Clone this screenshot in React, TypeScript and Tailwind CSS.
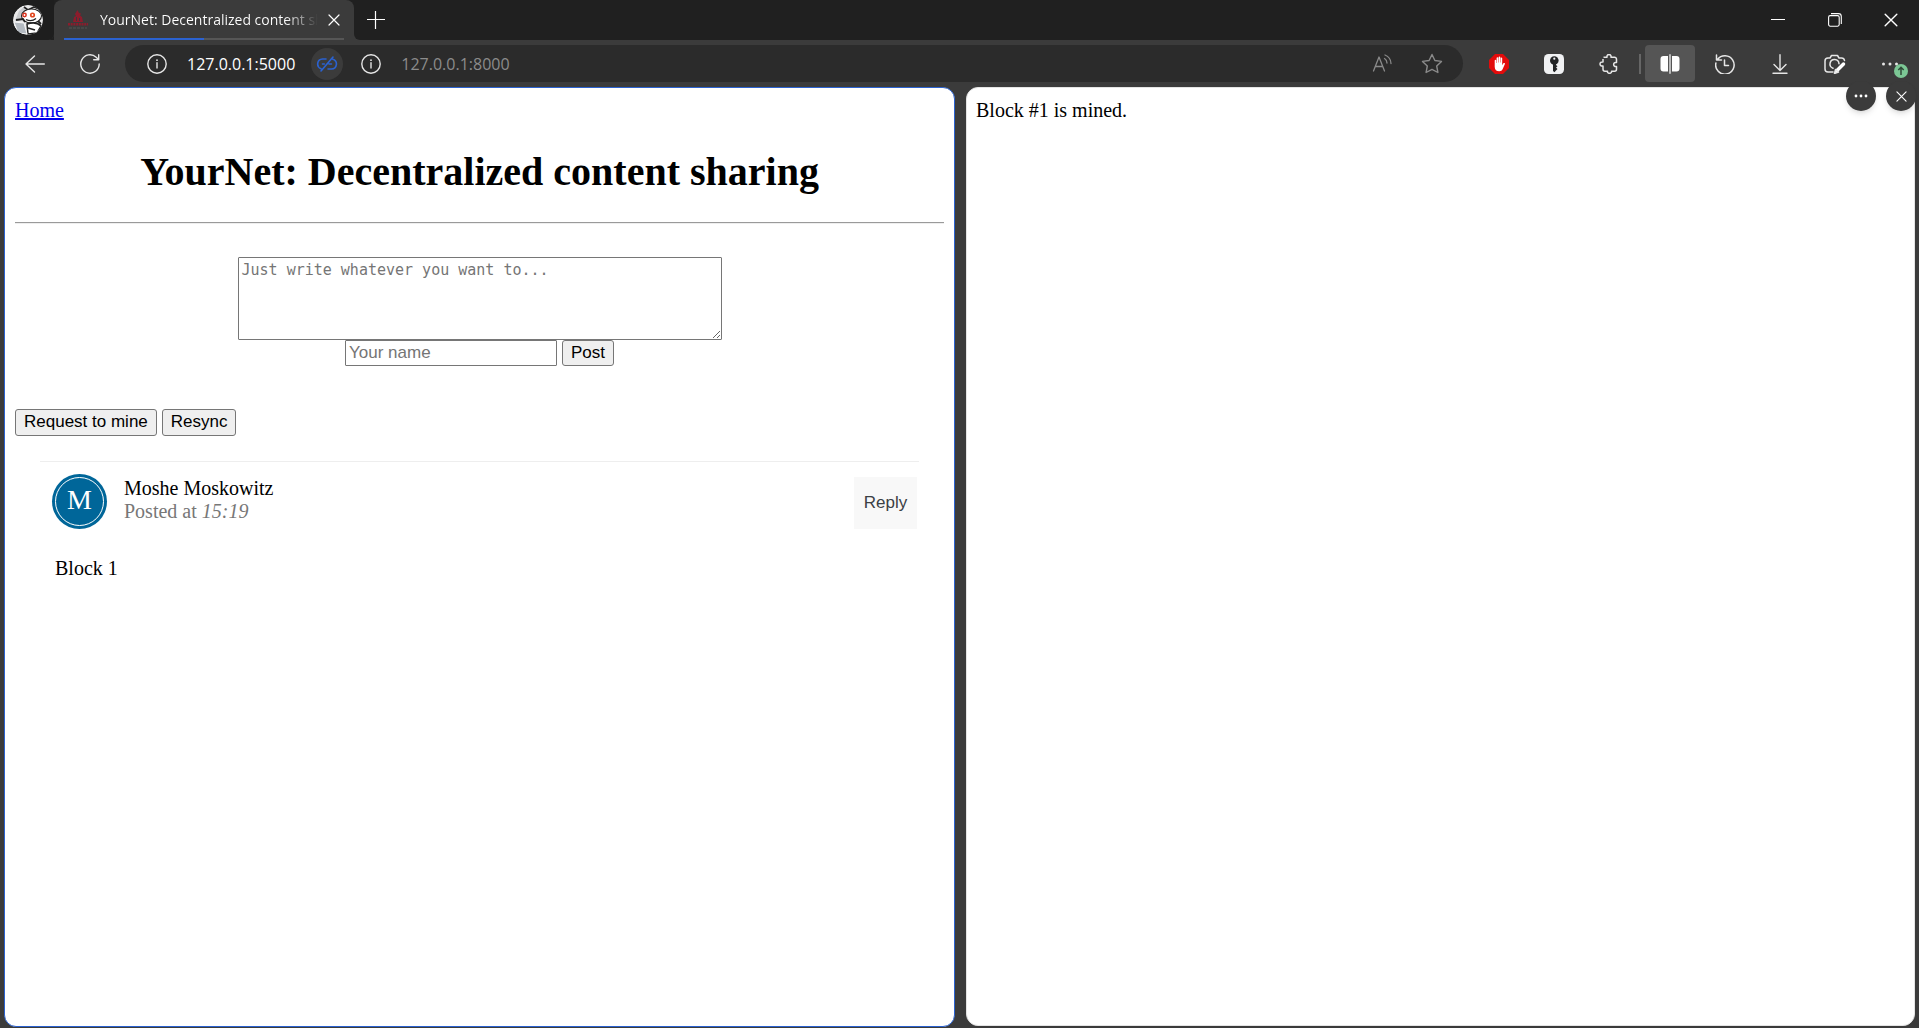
import type { ReactNode } from "react";

function InfoIcon() {
  return (
    <svg width="20" height="20" viewBox="0 0 20 20" fill="none" stroke="#e6e6e6" strokeWidth="1.4" className="shrink-0">
      <circle cx="10" cy="10" r="9.2" />
      <path d="M10 8.8V14" strokeLinecap="round" />
      <circle cx="10" cy="6.2" r="0.9" fill="#e6e6e6" stroke="none" />
    </svg>
  );
}

function CloseIcon({ size }: { size: number }) {
  return (
    <svg width={size} height={size} viewBox="0 0 12 12" fill="none" stroke="#fff" strokeWidth="1.2" strokeLinecap="round">
      <path d="M1 1l10 10M11 1L1 11" />
    </svg>
  );
}

function IconButton({ label, className = "", children }: { label: string; className?: string; children: ReactNode }) {
  return (
    <button type="button" aria-label={label} className={`flex shrink-0 items-center justify-center ${className}`}>
      {children}
    </button>
  );
}

function TabStrip() {
  return (
    <header className="flex h-10 bg-[#202020]">
      <div className="rounded-br-md bg-[#3b3b3b]">
        <div className="flex h-full w-[54px] items-center justify-center rounded-br-md bg-[#1e1e1e] pl-[2px]">
          <button type="button" aria-label="Profile" className="size-[30px] overflow-hidden rounded-full">
            <svg width="30" height="30" viewBox="0 0 30 30">
              <circle cx="15" cy="15" r="15" fill="#e9e9ea" />
              <path d="M2 16l4-10 5-4 2 5-5 8z" fill="#c9cbce" />
              <path d="M11 2l4 3 6-3 5 2" fill="none" stroke="#222" strokeWidth="1.6" />
              <ellipse cx="18.5" cy="11" rx="10" ry="7" fill="#fff" stroke="#222" strokeWidth="1.1" />
              <circle cx="11.5" cy="10" r="2.4" fill="#d5301c" />
              <circle cx="19.5" cy="10" r="2.6" fill="#e2461e" />
              <circle cx="11.5" cy="10" r="0.9" fill="#fff" />
              <circle cx="19.5" cy="10" r="0.9" fill="#fff" />
              <path d="M13 14.500c3 1.500 7 1.500 10-1" fill="none" stroke="#222" strokeWidth="1.300" />
              <path d="M3 15l7-1 2 3" fill="none" stroke="#222" strokeWidth="1.800" />
              <path d="M14 19c6-2 11-1 14 2l-4 7-9 1z" fill="#fff" stroke="#222" strokeWidth="1.500" />
              <path d="M1 17l10 1 3 11-9-1z" fill="#b4bac1" stroke="#f5f5f5" strokeWidth="1" />
              <path d="M15 23l7 2M25 16l3 3" stroke="#222" strokeWidth="1.800" />
            </svg>
          </button>
        </div>
      </div>
      <div className="flex w-[300px] flex-col rounded-t-lg bg-[#3b3b3b] px-[10px]">
        <div className="flex flex-1 items-center pt-[2px] pl-1">
          <svg width="20" height="20" viewBox="0 0 20 20" className="shrink-0">
            <path d="M9.500 0l1.500 3 2 .500-1 2 2 1.500 1 5H5l1-5 2-1-1-2z" fill="#8c1c2c" />
            <path d="M8 7h1v4H8zM11 8h1v3h-1z" fill="#3b3b3b" />
            <path d="M0 14.300h20" stroke="#8c1c2c" strokeWidth="2.600" strokeDasharray="2 .7" />
            <path d="M1 18h18" stroke="#545454" strokeWidth="1" strokeDasharray="3 1" />
          </svg>
          <span className="ml-3 w-[218px] overflow-hidden whitespace-nowrap bg-gradient-to-r from-white from-85% to-transparent bg-clip-text text-sm font-medium text-transparent">
            YourNet: Decentralized content sharing
          </span>
          <IconButton label="Close tab" className="ml-[6px] size-5">
            <CloseIcon size={12} />
          </IconButton>
        </div>
        <div className="h-[2px] bg-[#565656]">
          <div className="h-full w-1/2 bg-[#2b62d0]" />
        </div>
      </div>
      <div className="flex-1 bg-[#3b3b3b]">
        <div className="flex h-full items-center rounded-bl-md bg-[#202020]">
          <IconButton label="New tab" className="ml-2 size-7">
            <svg width="18" height="18" viewBox="0 0 18 18" stroke="#fff" strokeWidth="1.2">
              <path d="M8.500 0v18M0 8.500h18" />
            </svg>
          </IconButton>
          <div className="ml-auto flex h-full">
            <IconButton label="Minimize" className="w-[57px]">
              <svg width="14" height="14" viewBox="0 0 14 14" stroke="#fff">
                <path d="M0 6.5h14" />
              </svg>
            </IconButton>
            <IconButton label="Restore" className="w-[57px]">
              <svg width="14" height="14" viewBox="0 0 14 14" fill="none" stroke="#fff" strokeWidth="1.1">
                <rect x="0.6" y="2.6" width="10.6" height="10.6" rx="1.6" />
                <path d="M3 .6h7.5a2.8 2.8 0 0 1 2.8 2.8V11" />
              </svg>
            </IconButton>
            <IconButton label="Close window" className="w-14">
              <CloseIcon size={14} />
            </IconButton>
          </div>
        </div>
      </div>
    </header>
  );
}

function Toolbar() {
  return (
    <nav className="flex h-[47px] items-center pr-[2px] pl-[7px]">
      <IconButton label="Back" className="w-[55px]">
        <svg width="20" height="18" viewBox="0 0 20 18" fill="none" stroke="#e6e6e6" strokeWidth="1.4" strokeLinecap="round" strokeLinejoin="round">
          <path d="M19.3 9H1M9.5 1L1 9l8.500 8" />
        </svg>
      </IconButton>
      <IconButton label="Refresh" className="w-[55px]">
        <svg width="20" height="20" viewBox="0 0 20 20" fill="none" stroke="#e6e6e6" strokeWidth="1.4" strokeLinecap="round" strokeLinejoin="round">
          <path d="M19.200 10a9.200 9.200 0 1 1-3-6.800L18.500 5.500M18.700.8v5h-5" />
        </svg>
      </IconButton>
      <div className="mr-2 ml-2 flex h-[37px] min-w-0 flex-1 items-center rounded-full bg-[#2b2b2b] pl-[22px] text-base">
        <InfoIcon />
        <span className="ml-5 text-white">127.0.0.1:5000</span>
        <IconButton label="Unlink tabs" className="ml-4 size-8 rounded-full bg-[#3b3b3b]">
          <svg width="22" height="16" viewBox="0 0 22 16" fill="none" stroke="#2b62d0" strokeWidth="1.600" strokeLinecap="round">
            <path d="M10 3H6.500a5 5 0 0 0-1.500 9.700M16.800 3.200a5 5 0 0 1-1.300 9.800H12M6.500 8h1.800M13 8h2.500M17 1L5 15" />
          </svg>
        </IconButton>
        <span className="ml-[18px] flex">
          <InfoIcon />
        </span>
        <span className="ml-5 text-[#8c8c8c]">127.0.0.1:8000</span>
        <div className="ml-auto flex pr-[6px]">
          <IconButton label="Read aloud" className="w-[50px]">
            <svg width="20" height="20" viewBox="0 0 20 20" fill="none" stroke="#8a8a8a" strokeWidth="1.3" strokeLinecap="round" strokeLinejoin="round">
              <path d="M1.500 17L7 3l5.500 14M3.300 12.500h7.400M12.500 4.500c1.700 1 2.500 2.500 2.500 4.500M13 1c3.500 1.300 5.800 4.500 6 8.500" />
            </svg>
          </IconButton>
          <IconButton label="Add to favorites" className="w-[50px]">
            <svg width="22" height="21" viewBox="0 0 22 21" fill="none" stroke="#8a8a8a" strokeWidth="1.4" strokeLinejoin="round">
              <path d="M11 1.500l2.900 6 6.600.9-4.800 4.600 1.200 6.500-5.900-3.100-5.900 3.100 1.200-6.500L1.500 8.400l6.600-.9z" />
            </svg>
          </IconButton>
        </div>
      </div>
      <IconButton label="Ad blocker" className="w-[55px]">
        <svg width="20" height="20" viewBox="0 0 20 20">
          <path d="M6 0h8l6 6v8l-6 6H6l-6-6V6z" fill="#e30b0b" />
          <path d="M5.700 6.500c0-1 1.500-1 1.500 0V9h.4V4c0-1.100 1.600-1.100 1.600 0v4.500h.4V3.300c0-1.100 1.700-1.100 1.700 0v5.200h.4V4.200c0-1.100 1.500-1.100 1.500 0v7l1.200-1.900c.6-.8 1.900-.3 1.500.7l-2.200 5c-.7 1.600-1.700 2.200-3.500 2.200-2.700 0-4.500-1.500-4.500-4.500z" fill="#fff" />
        </svg>
      </IconButton>
      <IconButton label="Password manager" className="w-[55px]">
        <svg width="20" height="20" viewBox="0 0 20 20">
          <rect width="20" height="20" rx="4.500" fill="#f0f1f3" />
          <circle cx="10.300" cy="6.500" r="4.300" fill="#222426" />
          <circle cx="10.300" cy="4.700" r="1.100" fill="#f0f1f3" />
          <path d="M9 9h3v2l1.500 1.200L12 13.500l1.500 1.500-1.500 1.500-1.500 1.700L9 17z" fill="#222426" />
        </svg>
      </IconButton>
      <IconButton label="Extensions" className="w-[55px]">
        <svg width="20" height="20" viewBox="0 0 20 20" fill="none" stroke="#e6e6e6" strokeWidth="1.500" strokeLinejoin="round">
          <path d="M4.500 3.200H8c-.7-3.600 4.700-3.600 4 0h3.500a2 2 0 0 1 2 2V8.500c-3.800-.9-3.800 4.900 0 4v2.700a2 2 0 0 1-2 2H12.500c.6 2.800-4.600 2.800-4 0H6a2 2 0 0 1-2-2V12c-4 .6-4-4.600 0-4V5" />
        </svg>
      </IconButton>
      <div className="mr-1 ml-[3px] h-5 w-[2px] bg-[#666]" />
      <IconButton label="Split screen" className="h-[37px] w-[50px] rounded bg-[#555]">
        <svg width="20" height="20" viewBox="0 0 20 20" fill="#fff">
          <path d="M3.500 2H8v15.500H3.500A3 3 0 0 1 .5 14.500V5a3 3 0 0 1 3-3zM12 2h4.500a3 3 0 0 1 3 3v9.500a3 3 0 0 1-3 3H12zM9.400.2h1.200v19.500H9.400z" />
        </svg>
      </IconButton>
      <IconButton label="History" className="ml-[2px] w-[55px]">
        <svg width="20" height="20" viewBox="0 0 20 20" fill="none" stroke="#e6e6e6" strokeWidth="1.500" strokeLinecap="round" strokeLinejoin="round">
          <path d="M2.500 5.500A9.200 9.200 0 1 1 .9 9M1.500.9v5h5M9.500 6v5.500h4" />
        </svg>
      </IconButton>
      <IconButton label="Downloads" className="w-[55px]">
        <svg width="16" height="20" viewBox="0 0 16 20" fill="none" stroke="#e6e6e6" strokeWidth="1.400" strokeLinecap="round" strokeLinejoin="round">
          <path d="M8 .8v15.500M2 10.500l6 6 6-6M1 19.300h14" />
        </svg>
      </IconButton>
      <IconButton label="Screenshot" className="w-[55px]">
        <svg width="22" height="20" viewBox="0 0 22 20" fill="none" stroke="#e6e6e6" strokeWidth="1.500" strokeLinecap="round" strokeLinejoin="round">
          <path d="M9 18H4a3 3 0 0 1-3-3V7a3 3 0 0 1 3-3h2l1.500-2.500h6L15 4h2.500a3 3 0 0 1 3 2.500M9 14.200a4.500 4.500 0 1 1 6-4.500" />
          <path d="M19.500 10L13.500 16" stroke="#fff" strokeWidth="3.500" />
          <path d="M10.500 19.500l1-4 3 2.500z" fill="#fff" />
        </svg>
      </IconButton>
      <IconButton label="Settings and more" className="relative h-full w-[55px]">
        <svg width="18" height="4" viewBox="0 0 18 4" fill="#e6e6e6">
          <circle cx="2.500" cy="2" r="1.500" />
          <circle cx="9" cy="2" r="1.500" />
          <circle cx="15.500" cy="2" r="1.500" />
        </svg>
        <svg width="14" height="14" viewBox="0 0 14 14" className="absolute right-[9px] bottom-[9px]">
          <circle cx="7" cy="7" r="7" fill="#7cc795" />
          <path d="M7 11V3.500M4.300 6L7 3.300 9.700 6" fill="none" stroke="#2f4a38" strokeWidth="1.500" />
        </svg>
      </IconButton>
    </nav>
  );
}

const formButton =
  "rounded-[3px] border border-[#767676] bg-[#efefef] px-2 pb-[2px] font-['Liberation_Sans',Arial,sans-serif] text-[17px] leading-[19px] text-black";

function FeedPage() {
  return (
    <main className="min-w-0 flex-1 rounded-xl border border-[#2b62d0] bg-white px-[10px] py-[11px] font-['Liberation_Serif','Times_New_Roman',serif] text-xl leading-[23px] text-black">
      <a href="#home" className="text-[#0000ee] underline decoration-2">
        Home
      </a>
      <h1 className="mt-[27px] text-center text-[40px] leading-[46px] font-bold">YourNet: Decentralized content sharing</h1>
      <hr className="mt-[27px] border-t border-b border-t-[#9a9a9a] border-b-[#eee]" />
      <form className="mt-[33px] flex flex-col items-center font-['Liberation_Sans',Arial,sans-serif] text-[17px]">
        <textarea
          aria-label="Post content"
          placeholder="Just write whatever you want to..."
          className="block h-[83px] w-[484px] resize rounded-[1px] border border-[#767676] bg-white px-[3px] py-[3px] font-['DejaVu_Sans_Mono',monospace] text-[15px] leading-[19px] placeholder:text-[#757575]"
        />
        <div className="flex gap-[5px]">
          <input
            type="text"
            aria-label="Your name"
            placeholder="Your name"
            className="h-[26px] w-[212px] rounded-[1px] border border-[#767676] bg-white px-[3px] leading-[19px] placeholder:text-[#757575]"
          />
          <button type="button" className={`${formButton} h-[26px]`}>
            Post
          </button>
        </div>
      </form>
      <div className="mt-[43px] flex gap-[5px]">
        <button type="button" className={`${formButton} h-[27px]`}>
          Request to mine
        </button>
        <button type="button" className={`${formButton} h-[27px]`}>
          Resync
        </button>
      </div>
      <article className="mx-[25px] mt-[25px] border-t border-[#eee] px-3 pt-3">
        <div className="flex items-start">
          <div className="size-[55px] shrink-0 rounded-full bg-[#006699] p-[3px]">
            <div className="flex h-full items-center justify-center rounded-full border border-white pb-1 text-[28px] text-white">M</div>
          </div>
          <div className="mt-[3px] ml-[17px] flex-1">
            <p>Moshe Moskowitz</p>
            <p className="text-[#777]">
              Posted at <i>15:19</i>
            </p>
          </div>
          <button
            type="button"
            className="mt-[3px] -mr-[10px] h-[52px] w-[63px] bg-[#f8f8f8] pb-[2px] font-['Liberation_Sans',Arial,sans-serif] text-[17px] text-[#3b4045]"
          >
            Reply
          </button>
        </div>
        <p className="mt-7 ml-[3px]">Block 1</p>
      </article>
    </main>
  );
}

function StatusPage() {
  return (
    <section className="relative mb-px min-w-0 flex-1 rounded-xl border border-[#e4e4e4] bg-white px-[9px] py-[11px] font-['Liberation_Serif','Times_New_Roman',serif] text-xl leading-[23px] text-black">
      <p>Block #1 is mined.</p>
      <div className="absolute -top-[7px] -right-[2px] flex gap-[10px]">
        <IconButton label="Pane options" className="size-[30px] rounded-full bg-[#3b3b3b] shadow-md">
          <svg width="14" height="4" viewBox="0 0 14 4" fill="#fff">
            <circle cx="2" cy="2" r="1.400" />
            <circle cx="7" cy="2" r="1.400" />
            <circle cx="12" cy="2" r="1.400" />
          </svg>
        </IconButton>
        <IconButton label="Close pane" className="size-[30px] rounded-full bg-[#3b3b3b] shadow-md">
          <CloseIcon size={11} />
        </IconButton>
      </div>
    </section>
  );
}

export default function App() {
  return (
    <div className="flex min-h-screen flex-col bg-[#3b3b3b] font-['Open_Sans','Noto_Sans',sans-serif]">
      <TabStrip />
      <Toolbar />
      <div className="flex flex-1 gap-[11px] px-1 pb-px">
        <FeedPage />
        <StatusPage />
      </div>
    </div>
  );
}
